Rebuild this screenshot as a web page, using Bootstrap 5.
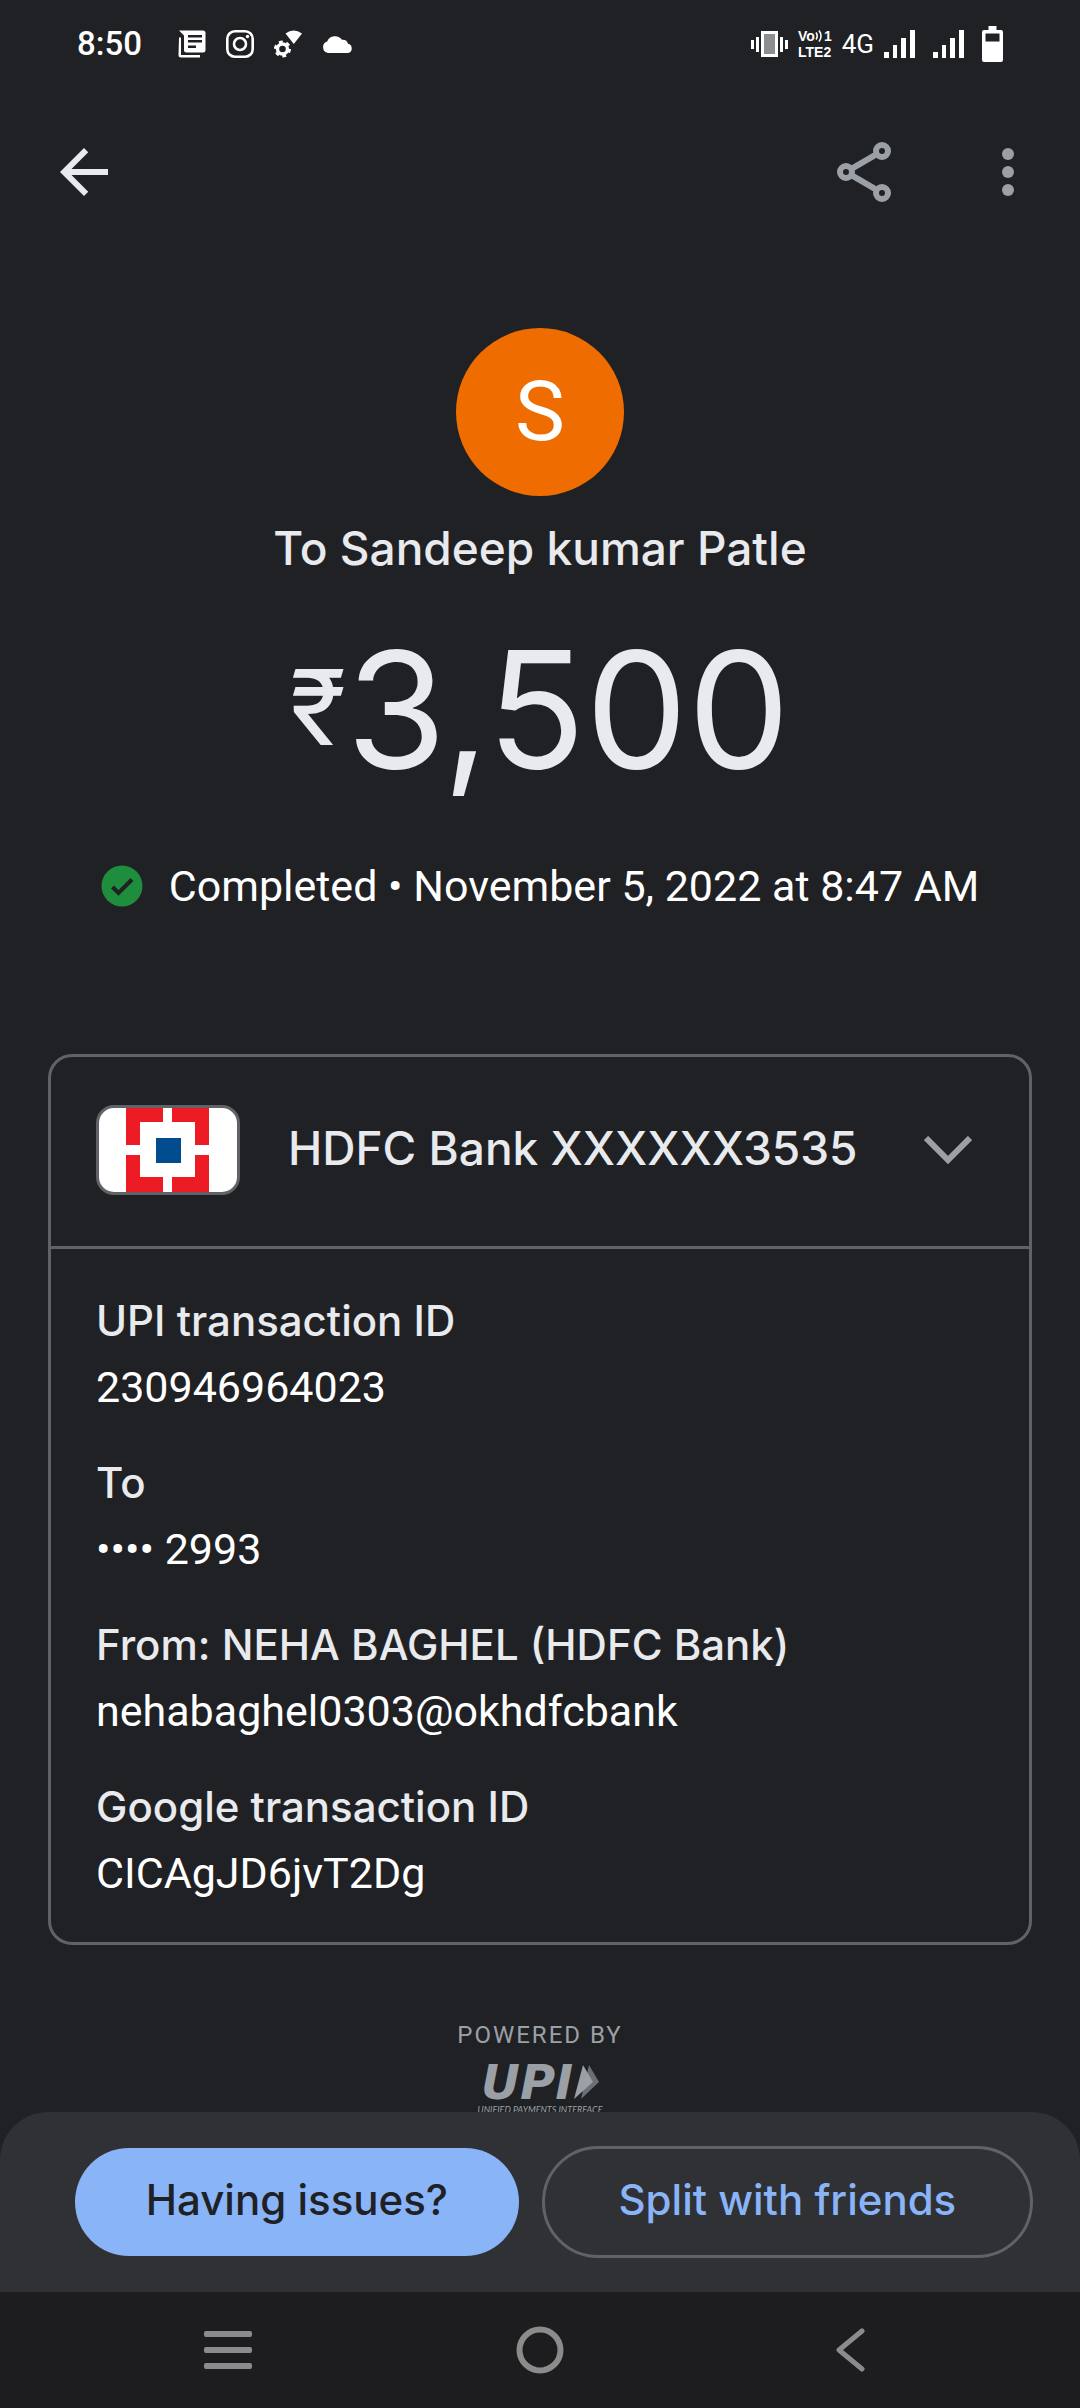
<!DOCTYPE html>
<html lang="en" data-bs-theme="dark">
<head>
<meta charset="utf-8">
<meta name="viewport" content="width=device-width, initial-scale=1">
<title>Payment details</title>
<link href="https://cdn.jsdelivr.net/npm/bootstrap@5.3.0/dist/css/bootstrap.min.css" rel="stylesheet">
<style>
  :root { --page: #202124; --ink: #e8eaed; --line: #5f6368; --muted: #9aa0a6; --accent: #8ab4f8; }
  body { background: var(--page); color: #fff; font-family: Roboto, "Noto Sans", sans-serif; font-size: 43px; line-height: 66px; padding-bottom: 290px; }
  svg { display: block; flex-shrink: 0; }
  .statusbar { height: 88px; padding: 0 77px; }
  .clock { font-size: 33px; line-height: 40px; font-weight: 500; padding-right: 16px; }
  .status-icons { gap: 20px; }
  .net-icons { gap: 10px; }
  .net-volte { font: 700 14px/16px "Liberation Sans", sans-serif; }
  .net-type { font-size: 26px; line-height: 32px; }
  .appbar { height: 168px; padding: 0 36px 0 48px; }
  .icon-btn { padding: 0; border: 0; color: var(--muted); line-height: 1; }
  .avatar { width: 168px; height: 168px; background: #ef6c00; font-size: 84px; line-height: 168px; }
  .brand-font { font-family: Inter, Roboto, sans-serif; color: var(--ink); }
  .payee { font-size: 46px; line-height: 60px; font-weight: 500; margin-top: 22px; }
  .amount { font-size: 162px; line-height: 168px; margin-top: 47px; }
  .rupee { font-size: 104px; line-height: 120px; padding-top: 22px; }
  .done-row { gap: 26px; margin-top: 60px; }
  .details { margin: 135px 48px 0; border: 3px solid var(--line); border-radius: 24px; }
  .bank-row { height: 192px; padding: 0 57px 3px 45px; border-bottom: 3px solid var(--line); }
  .bank-logo { border: 3px solid var(--line); border-radius: 18px; overflow: hidden; background: #fff; }
  .bank-name { font-size: 46px; line-height: 60px; font-weight: 500; padding: 0 0 4px 48px; }
  .facts { padding: 39px 45px 36px; }
  .facts dt { font-size: 42px; font-weight: 500; }
  .facts dd { margin: 0 0 30px; }
  .facts dd:last-child { margin: 0; }
  .powered { margin-top: 74px; color: var(--muted); }
  .powered-label { font-size: 24px; line-height: 32px; letter-spacing: 2px; }
  .upi-word { font: italic 700 48px/46px "DejaVu Sans", sans-serif; }
  .upi-tag { font: italic 9px/10px Lato, sans-serif; }
  .sheet { background: #303134; border-radius: 48px 48px 0 0; padding: 34px 47px 34px 75px; gap: 23px; }
  .sheet .btn { font-family: Inter, Roboto, sans-serif; font-size: 42px; line-height: 60px; font-weight: 500; height: 108px; padding: 0 40px 4px; border: 0; }
  .sheet .btn-issues { background: var(--accent); color: #202124; padding: 0 37px 4px; }
  .sheet .btn-split { color: var(--accent); border: 3px solid var(--line); height: 112px; }
  .sysnav { background: #1d1d1f; height: 116px; padding: 0 208px 0 204px; }
  .sysnav .icon-btn { color: #8b8b8b; }
</style>
</head>
<body>
<header>
  <div class="statusbar d-flex justify-content-between align-items-center">
    <div class="status-icons d-flex align-items-center">
      <span class="clock">8:50</span>
      <svg width="28" height="28" viewBox="0 0 28 28" fill="#fff"><path d="M1 7.500h2v17.500h19v2.500H3a2.500 2.500 0 0 1-2.500-2.500z"/><path fill-rule="evenodd" d="M1 .500h24a2.500 2.500 0 0 1 2.500 2.500v17a2.500 2.500 0 0 1-2.500 2.500H8.500A2.500 2.500 0 0 1 6 20V5.500zM10 5v2.500h14V5zM10 10v2.500h14V10zM10 15.500V18h8v-2.500z"/></svg>
      <svg width="28" height="28" viewBox="0 0 28 28" fill="none" stroke="#fff" stroke-width="2.600"><rect x="1.300" y="1.300" width="25.400" height="25.400" rx="7.500"/><circle cx="14" cy="14" r="6"/><circle cx="21.500" cy="6.500" r="1.700" fill="#fff" stroke="none"/></svg>
      <svg width="28" height="28" viewBox="0 0 28 28" fill="#fff"><path d="M11.500 3.500Q19.500-2.500 28 3.500L19.800 14z"/><circle cx="8.500" cy="19" r="5" fill="none" stroke="#fff" stroke-width="3.400"/><circle cx="8.500" cy="19" r="7" fill="none" stroke="#fff" stroke-width="3" stroke-dasharray="3.700 3.630"/></svg>
      <svg width="31" height="17" viewBox="0 0 31 17" fill="#fff"><path d="M6 17a6 6 0 0 1-.800-11.600A8.500 8.500 0 0 1 20 3.800a5.500 5.500 0 0 1 6 4A4.700 4.700 0 0 1 26 17z"/></svg>
    </div>
    <div class="net-icons d-flex align-items-center">
      <svg width="37" height="26" viewBox="0 0 37 26" fill="#fff"><path d="M0 9h3v9H0zM5 6h3v15H5zM29 6h3v15h-3zM34 9h3v9h-3z"/><rect x="11.500" y="1.500" width="14" height="23" fill="#8d8e90" stroke="#fff" stroke-width="3"/></svg>
      <div class="net-volte">
        <div class="d-flex align-items-center">Vo<svg width="9" height="14" viewBox="0 0 9 14" fill="none" stroke="#fff" stroke-width="1.600"><path d="M1 3.500q2.500 3.500 0 7M4 1.500q4 5.500 0 11"/></svg>1</div>
        <div>LTE2</div>
      </div>
      <span class="net-type">4G</span>
      <svg width="31" height="28" viewBox="0 0 31 28" fill="#fff"><path d="M0 22h5v6H0zM9 15h4v13H9zM17 8h5v20h-5zM26 0h5v28h-5z"/></svg>
      <svg class="ms-2" width="31" height="28" viewBox="0 0 31 28" fill="#fff"><path d="M0 22h5v6H0zM9 15h4v13H9zM17 8h5v20h-5zM26 0h5v28h-5z"/></svg>
      <svg class="ms-2" width="21" height="36" viewBox="0 0 21 36" fill="#fff"><path fill-rule="evenodd" d="M6.500 0h8v4H19a2 2 0 0 1 2 2v28a2 2 0 0 1-2 2H2a2 2 0 0 1-2-2V6a2 2 0 0 1 2-2h4.500zM3.500 7.500v8h14v-8z"/></svg>
    </div>
  </div>
  <nav class="appbar d-flex align-items-center">
    <button class="btn icon-btn me-auto" type="button" aria-label="Back"><svg width="72" height="72" viewBox="0 0 24 24" fill="#e8eaed"><path d="M20 11H7.830l5.590-5.590L12 4l-8 8 8 8 1.410-1.410L7.830 13H20z"/></svg></button>
    <button class="btn icon-btn" type="button" aria-label="Share"><svg width="72" height="72" viewBox="0 0 24 24" fill="none" stroke="currentColor" stroke-width="2"><circle cx="18" cy="5" r="2"/><circle cx="6" cy="12" r="2"/><circle cx="18" cy="19" r="2"/><path d="M7.800 10.950l8.300-4.850M7.800 13.050l8.300 4.850"/></svg></button>
    <button class="btn icon-btn ms-5 ps-4" type="button" aria-label="More options"><svg width="72" height="72" viewBox="0 0 24 24" fill="currentColor"><circle cx="12" cy="6" r="2"/><circle cx="12" cy="12" r="2"/><circle cx="12" cy="18" r="2"/></svg></button>
  </nav>
</header>

<main>
  <section class="d-flex flex-column align-items-center pt-5">
    <div class="avatar rounded-circle text-center mt-4">S</div>
    <h1 class="brand-font payee mb-0">To Sandeep kumar Patle</h1>
    <div class="brand-font amount d-flex align-items-start"><span class="rupee">₹</span><span>3,500</span></div>
    <div class="done-row d-flex align-items-center">
      <svg width="42" height="42" viewBox="0 0 42 42"><circle cx="21" cy="21" r="20.500" fill="#1e8e3e"/><path d="M11.500 22l6 6L31 14.500" fill="none" stroke="#202124" stroke-width="4"/></svg>
      <span>Completed • November 5, 2022 at 8:47 AM</span>
    </div>
  </section>

  <section class="details">
    <div class="bank-row d-flex align-items-center">
      <div class="bank-logo"><svg width="138" height="84" viewBox="0 0 138 84"><path fill="#ed1c24" d="M27 0h37v14H41v23H27zM73 0h37v37H96V14H73zM27 47h14v22h23v15H27zM96 47h14v37H73V69h23z"/><path fill="#004c8f" d="M57 30h25v25H57z"/></svg></div>
      <h2 class="brand-font bank-name mb-0 me-auto">HDFC Bank XXXXXX3535</h2>
      <button class="btn icon-btn" type="button" aria-label="Collapse details"><svg width="48" height="28" viewBox="0 0 48 28" fill="none" stroke="currentColor" stroke-width="6"><path d="M2 2l22 22L46 2"/></svg></button>
    </div>
    <dl class="facts mb-0">
      <dt class="brand-font">UPI transaction ID</dt><dd>230946964023</dd>
      <dt class="brand-font">To</dt><dd>•••• 2993</dd>
      <dt class="brand-font">From: NEHA BAGHEL (HDFC Bank)</dt><dd>nehabaghel0303@okhdfcbank</dd>
      <dt class="brand-font">Google transaction ID</dt><dd>CICAgJD6jvT2Dg</dd>
    </dl>
  </section>

  <section class="powered d-flex flex-column align-items-center">
    <div class="powered-label">POWERED BY</div>
    <div class="d-flex align-items-center mt-2">
      <span class="upi-word">UPI</span>
      <svg width="26" height="34" viewBox="0 0 26 34"><path d="M16 0l10 17L8 34z" fill="#6b6f74"/><path d="M10 0l10 17L1 34z" fill="#9aa0a6"/></svg>
    </div>
    <div class="upi-tag">UNIFIED PAYMENTS INTERFACE</div>
  </section>
</main>

<footer class="fixed-bottom">
  <div class="sheet d-flex align-items-center">
    <button class="btn btn-issues rounded-pill flex-grow-1" type="button">Having issues?</button>
    <button class="btn btn-split rounded-pill flex-grow-1" type="button">Split with friends</button>
  </div>
  <nav class="sysnav d-flex align-items-center justify-content-between">
    <button class="btn icon-btn" type="button" aria-label="Recent apps"><svg width="48" height="38" viewBox="0 0 48 38" fill="currentColor"><rect width="48" height="6" rx="2"/><rect y="16" width="48" height="6" rx="2"/><rect y="32" width="48" height="6" rx="2"/></svg></button>
    <button class="btn icon-btn" type="button" aria-label="Home"><svg width="48" height="48" viewBox="0 0 48 48" fill="none" stroke="currentColor" stroke-width="6"><circle cx="24" cy="24" r="20.500"/></svg></button>
    <button class="btn icon-btn" type="button" aria-label="Go back"><svg width="44" height="44" viewBox="-7 0 44 44" fill="none" stroke="currentColor" stroke-width="5" stroke-linecap="round" stroke-linejoin="round"><path d="M27 3L4 22l23 19"/></svg></button>
  </nav>
</footer>
<script src="https://cdn.jsdelivr.net/npm/bootstrap@5.3.0/dist/js/bootstrap.bundle.min.js"></script>
</body>
</html>
